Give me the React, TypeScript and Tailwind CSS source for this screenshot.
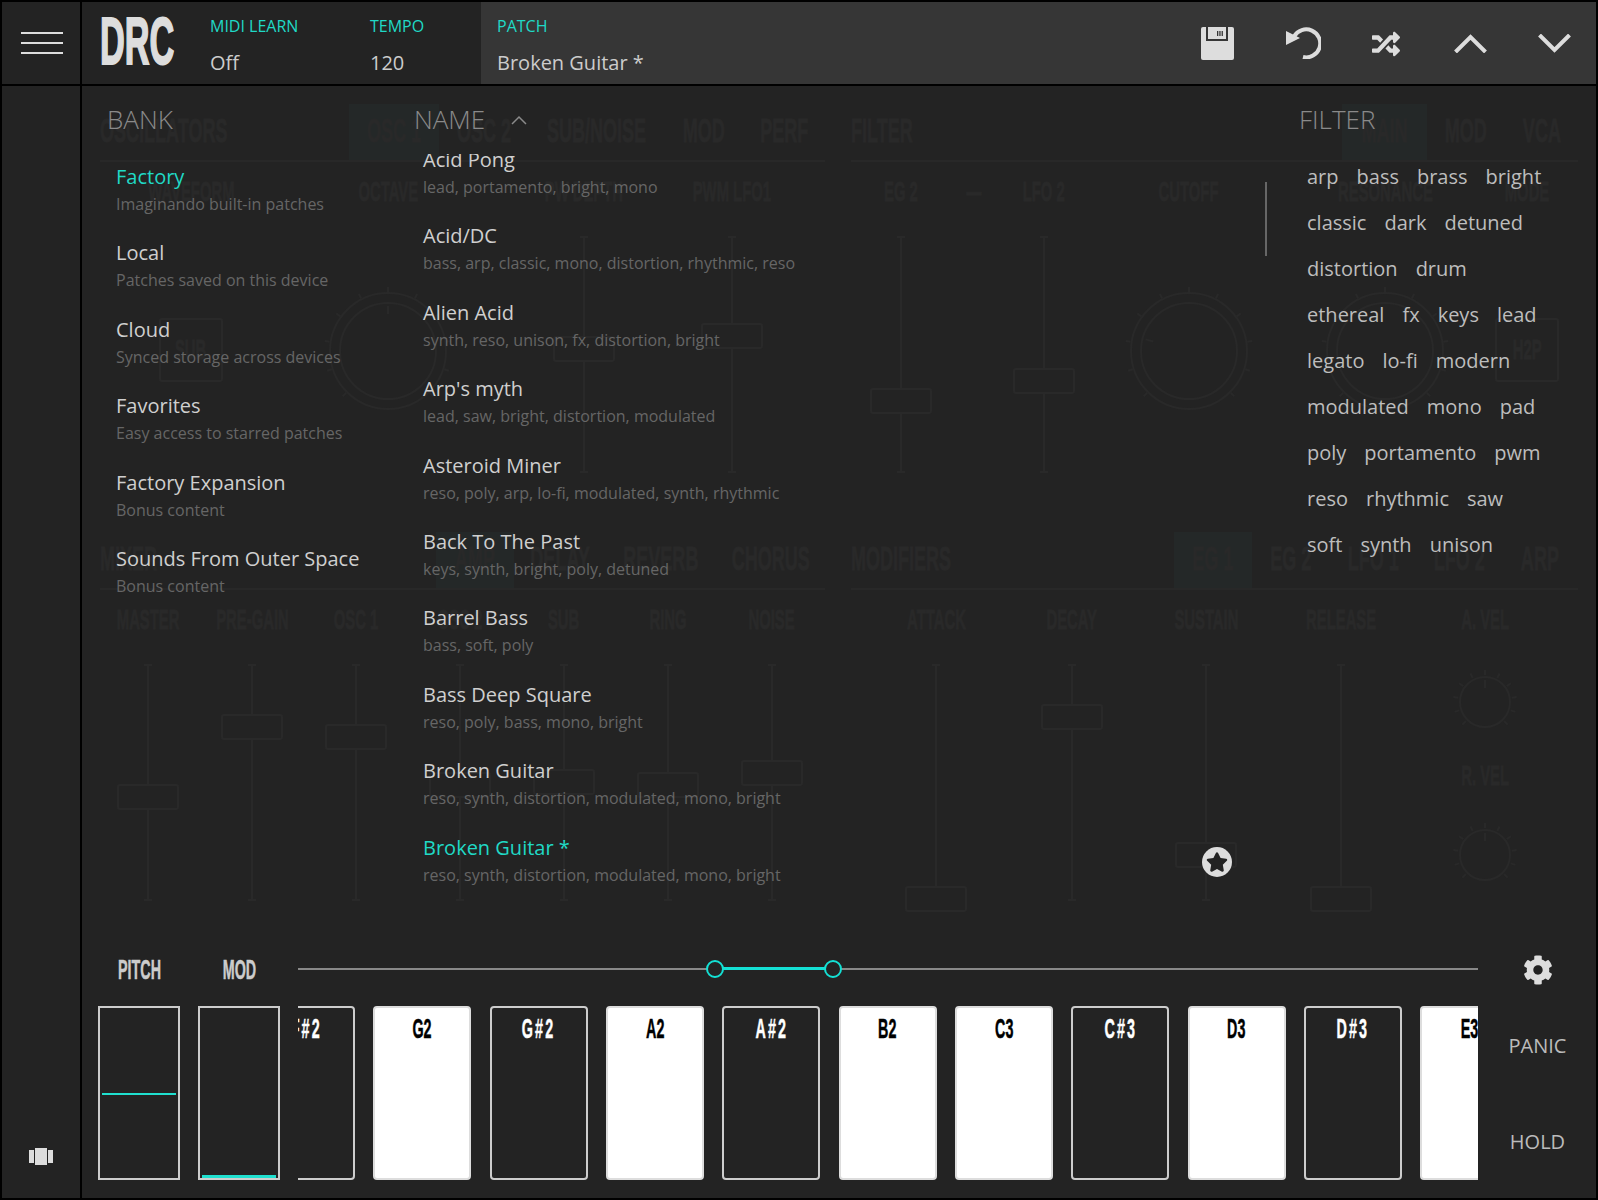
import { FaCog, FaRandom, FaStar } from "react-icons/fa";

const Cond = ({
  children,
  className = "",
  scale = "scale-x-[0.53]",
}: {
  children: React.ReactNode;
  className?: string;
  scale?: string;
}) => (
  <span
    className={`inline-block whitespace-nowrap font-bold font-['Liberation_Sans',sans-serif] ${scale} ${className}`}
  >
    {children}
  </span>
);

const Tab = ({ label, w, active }: { label: string; w: string; active?: boolean }) => (
  <div className={`${w} flex h-[56px] items-center justify-center pb-[3px] ${active ? "bg-[#242828]" : ""}`}>
    <Cond className="origin-center text-[34px] text-[#292929] [-webkit-text-stroke:1px]">{label}</Cond>
  </div>
);

const GhostLabel = ({ label }: { label: string }) => (
  <div className="mt-[15px] flex h-[30px] w-full items-center justify-center">
    <Cond className="origin-center text-[28px] text-[#292929] [-webkit-text-stroke:1px]">{label}</Cond>
  </div>
);

const Fader = ({ top }: { top: number }) => (
  <div className="relative mt-[29px] flex h-[237px] w-[62px] justify-center">
    <div className="h-full w-[2px] bg-[#292929]" />
    <div className="absolute left-[27px] top-0 h-[2px] w-[8px] bg-[#292929]" />
    <div className="absolute bottom-0 left-[27px] h-[2px] w-[8px] bg-[#292929]" />
    <div
      className="absolute left-0 h-[26px] w-[62px] rounded-[3px] border-2 border-[#292929] bg-[#232323]"
      style={{ top }}
    />
  </div>
);

const Knob = ({ size, angle, small }: { size: number; angle: number; small?: boolean }) => {
  const c = size / 2;
  const outer = small ? 25 : 58;
  const inner = small ? 25 : 48;
  const ticks = Array.from({ length: 11 }, (_, i) => -135 + i * 27);
  return (
    <svg width={size} height={size} viewBox={`0 0 ${size} ${size}`} fill="none" stroke="#292929" strokeWidth={2}>
      <circle cx={c} cy={c} r={outer} />
      {!small && <circle cx={c} cy={c} r={inner} />}
      {ticks.map((t) => (
        <line key={t} x1={c} y1={0} x2={c} y2={5} transform={`rotate(${t} ${c} ${c})`} />
      ))}
      <line x1={c} y1={c - inner + 3} x2={c} y2={c - inner + 11} transform={`rotate(${angle} ${c} ${c})`} />
    </svg>
  );
};

const GhostBox = ({ label }: { label: string }) => (
  <div className="mt-[111px] flex h-[64px] w-[64px] items-center justify-center rounded-[3px] border-2 border-[#292929]">
    <Cond className="origin-center text-[28px] text-[#292929] [-webkit-text-stroke:1px]">{label}</Cond>
  </div>
);

// the synth panel, dimmed behind the patch browser
const GhostPanel = () => (
  <div className="absolute inset-0 flex flex-col pl-[18px] pt-[18px]">
    <div className="flex h-[428px] gap-[26px]">
      <div className="w-[725px]">
        <div className="flex border-b-2 border-[#282828]">
          <div className="flex w-[249px] items-center pb-[3px]">
            <Cond className="origin-left text-[34px] text-[#292929] [-webkit-text-stroke:1px]">OSCILLATORS</Cond>
          </div>
          <Tab label="OSC 1" w="w-[90px]" active />
          <Tab label="OSC 2" w="w-[90px]" />
          <Tab label="SUB/NOISE" w="w-[136px]" />
          <Tab label="MOD" w="w-[78px]" />
          <Tab label="PERF" w="w-[82px]" />
        </div>
        <div className="flex">
          <div className="flex w-[182px] flex-col items-center">
            <GhostLabel label="WAVEFORM" />
            <GhostBox label="SUB" />
          </div>
          <div className="flex w-[212px] flex-col items-center">
            <GhostLabel label="OCTAVE" />
            <div className="mt-[80px]">
              <Knob size={128} angle={0} />
            </div>
          </div>
          <div className="flex w-[180px] flex-col items-center">
            <GhostLabel label="PW DEPTH" />
            <Fader top={100} />
          </div>
          <div className="flex w-[116px] flex-col items-center">
            <GhostLabel label="PWM LFO1" />
            <Fader top={87} />
          </div>
        </div>
      </div>
      <div className="w-[727px]">
        <div className="flex border-b-2 border-[#282828]">
          <div className="flex w-[491px] items-center pb-[3px]">
            <Cond className="origin-left text-[34px] text-[#292929] [-webkit-text-stroke:1px]">FILTER</Cond>
          </div>
          <Tab label="MAIN" w="w-[85px]" active />
          <Tab label="MOD" w="w-[78px]" />
          <Tab label="VCA" w="w-[73px]" />
        </div>
        <div className="flex">
          <div className="flex w-[100px] flex-col items-center">
            <GhostLabel label="EG 2" />
            <Fader top={152} />
          </div>
          <div className="flex w-[46px] flex-col items-center">
            <GhostLabel label="—" />
          </div>
          <div className="flex w-[94px] flex-col items-center">
            <GhostLabel label="LFO 2" />
            <Fader top={132} />
          </div>
          <div className="flex w-[196px] flex-col items-center">
            <GhostLabel label="CUTOFF" />
            <div className="mt-[80px]">
              <Knob size={128} angle={-75} />
            </div>
          </div>
          <div className="flex w-[196px] flex-col items-center">
            <GhostLabel label="RESONANCE" />
            <div className="mt-[80px]">
              <Knob size={128} angle={40} />
            </div>
          </div>
          <div className="flex w-[88px] flex-col items-center">
            <GhostLabel label="MODE" />
            <GhostBox label="H2P" />
          </div>
        </div>
      </div>
    </div>
    <div className="flex gap-[26px]">
      <div className="w-[725px]">
        <div className="flex border-b-2 border-[#282828]">
          <div className="flex w-[336px] items-center pb-[3px]">
            <Cond className="origin-left text-[34px] text-[#292929] [-webkit-text-stroke:1px]">MIXER</Cond>
          </div>
          <Tab label="AMP" w="w-[78px]" active />
          <Tab label="DELAY" w="w-[92px]" />
          <Tab label="REVERB" w="w-[110px]" />
          <Tab label="CHORUS" w="w-[109px]" />
        </div>
        <div className="-ml-[4px] flex">
          {(
            [
              ["MASTER", 120],
              ["PRE-GAIN", 50],
              ["OSC 1", 60],
              ["OSC 2", 108],
              ["SUB", 105],
              ["RING", 108],
              ["NOISE", 96],
            ] as const
          ).map(([label, top]) => (
            <div key={label} className="flex w-[104px] flex-col items-center">
              <GhostLabel label={label} />
              <Fader top={top} />
            </div>
          ))}
        </div>
      </div>
      <div className="w-[727px]">
        <div className="flex border-b-2 border-[#282828]">
          <div className="flex w-[323px] items-center pb-[3px]">
            <Cond className="origin-left text-[34px] text-[#292929] [-webkit-text-stroke:1px]">MODIFIERS</Cond>
          </div>
          <Tab label="EG 1" w="w-[78px]" active />
          <Tab label="EG 2" w="w-[78px]" />
          <Tab label="LFO 1" w="w-[86px]" />
          <Tab label="LFO 2" w="w-[86px]" />
          <Tab label="ARP" w="w-[76px]" />
        </div>
        <div className="flex">
          <div className="flex w-[170px] flex-col items-center">
            <GhostLabel label="ATTACK" />
            <Fader top={222} />
          </div>
          <div className="flex w-[102px] flex-col items-center">
            <GhostLabel label="DECAY" />
            <Fader top={40} />
          </div>
          <div className="flex w-[166px] flex-col items-center">
            <GhostLabel label="SUSTAIN" />
            <Fader top={178} />
          </div>
          <div className="flex w-[104px] flex-col items-center">
            <GhostLabel label="RELEASE" />
            <Fader top={222} />
          </div>
          <div className="flex w-[184px] flex-col items-center">
            <GhostLabel label="A. VEL" />
            <div className="mt-[35px]">
              <Knob size={64} angle={0} small />
            </div>
            <div className="mt-[27px] flex h-[30px] w-full items-center justify-center">
              <Cond className="origin-center text-[28px] text-[#292929] [-webkit-text-stroke:1px]">R. VEL</Cond>
            </div>
            <div className="mt-[32px]">
              <Knob size={64} angle={0} small />
            </div>
          </div>
        </div>
      </div>
    </div>
  </div>
);

const banks = [
  ["Factory", "Imaginando built-in patches"],
  ["Local", "Patches saved on this device"],
  ["Cloud", "Synced storage across devices"],
  ["Favorites", "Easy access to starred patches"],
  ["Factory Expansion", "Bonus content"],
  ["Sounds From Outer Space", "Bonus content"],
];

const patches = [
  ["Acid Pong", "lead, portamento, bright, mono"],
  ["Acid/DC", "bass, arp, classic, mono, distortion, rhythmic, reso"],
  ["Alien Acid", "synth, reso, unison, fx, distortion, bright"],
  ["Arp's myth", "lead, saw, bright, distortion, modulated"],
  ["Asteroid Miner", "reso, poly, arp, lo-fi, modulated, synth, rhythmic"],
  ["Back To The Past", "keys, synth, bright, poly, detuned"],
  ["Barrel Bass", "bass, soft, poly"],
  ["Bass Deep Square", "reso, poly, bass, mono, bright"],
  ["Broken Guitar", "reso, synth, distortion, modulated, mono, bright"],
  ["Broken Guitar *", "reso, synth, distortion, modulated, mono, bright"],
];

const tags = [
  "arp", "bass", "brass", "bright", "classic", "dark", "detuned", "distortion", "drum", "ethereal", "fx", "keys",
  "lead", "legato", "lo-fi", "modern", "modulated", "mono", "pad", "poly", "portamento", "pwm", "reso", "rhythmic",
  "saw", "soft", "synth", "unison",
];

const keys = [
  ["F#2", true], ["G2", false], ["G#2", true], ["A2", false], ["A#2", true], ["B2", false],
  ["C3", false], ["C#3", true], ["D3", false], ["D#3", true], ["E3", false],
] as const;

const ListItem = ({ title, sub, active }: { title: string; sub: string; active?: boolean }) => (
  <div className="h-[76.400px] pt-[11px]">
    <div className={`text-[20px] leading-[27px] ${active ? "text-[#20d9c6]" : "text-[#cfcfcf]"}`}>{title}</div>
    <div className="mt-[3px] whitespace-nowrap text-[16px] leading-[22px] text-[#666666]">{sub}</div>
  </div>
);

const HeaderField = ({ label, value }: { label: string; value: string }) => (
  <div className="pt-[14px]">
    <div className="text-[16px] leading-[20px] text-[#20d9c6]">{label}</div>
    <div className="mt-[13px] text-[20px] leading-[27px] text-[#cccccc]">{value}</div>
  </div>
);

const App = () => {
  return (
    <div className="flex h-[1200px] w-[1598px] flex-col border-2 border-black bg-[#232323] font-['Open_Sans',sans-serif]">
      {/* top bar */}
      <div className="flex h-[82px] shrink-0">
        <div className="flex w-[78px] flex-col items-center justify-center gap-[8px] pl-[2px]">
          <div className="h-[2px] w-[42px] bg-[#dddddd]" />
          <div className="h-[2px] w-[42px] bg-[#dddddd]" />
          <div className="h-[2px] w-[42px] bg-[#dddddd]" />
        </div>
        <div className="w-[2px] bg-black" />
        <div className="flex w-[128px] items-center pb-[4px] pl-[18px]">
          <Cond
            scale="scale-x-[0.52]"
            className="origin-left text-[66px] leading-none text-[#dddddd] [-webkit-text-stroke:2px]"
          >
            DRC
          </Cond>
        </div>
        <div className="w-[160px]">
          <HeaderField label="MIDI LEARN" value="Off" />
        </div>
        <div className="w-[111px]">
          <HeaderField label="TEMPO" value="120" />
        </div>
        <div className="flex flex-1 justify-between bg-[#363636] pl-[16px]">
          <HeaderField label="PATCH" value="Broken Guitar *" />
          <div className="mr-[25px] flex items-center gap-[51px] text-[#dddddd]">
            <svg width="33" height="33" viewBox="0 0 33 33" fill="currentColor">
              <path d="M2 0H31a2 2 0 0 1 2 2V31a2 2 0 0 1-2 2H2a2 2 0 0 1-2-2V2a2 2 0 0 1 2-2Z" />
              <rect x="5" y="0" width="22" height="14" fill="#363636" />
              <rect x="7" y="0" width="18" height="12" fill="#dddddd" />
              <path d="M16 4h1.300v5H16zM18.300 4h1.300v5h-1.300zM20.600 4h1.300v5h-1.300z" fill="#363636" />
            </svg>
            <svg width="36" height="32" viewBox="0 0 36 32" fill="none" stroke="currentColor" strokeWidth="4">
              <path d="M9 9.500A14 14 0 1 1 18 30" />
              <path d="M1 4 L1 18 L15 11 Z" fill="currentColor" stroke="none" />
            </svg>
            <div className="flex w-[31px] justify-start pt-[2px]">
              <FaRandom size={28} />
            </div>
            <svg width="33" height="19" viewBox="0 0 33 19" fill="none" stroke="currentColor" strokeWidth="4">
              <path d="M1.500 18 16.500 3l15 15" />
            </svg>
            <svg width="33" height="19" viewBox="0 0 33 19" fill="none" stroke="currentColor" strokeWidth="4">
              <path d="M1.500 1 16.500 16l15-15" />
            </svg>
          </div>
        </div>
      </div>
      <div className="h-[2px] shrink-0 bg-black" />

      <div className="flex min-h-0 flex-1">
        {/* left rail */}
        <div className="flex w-[78px] items-end justify-center pb-[33px]">
          <svg width="24" height="17" viewBox="0 0 24 17" fill="#dddddd">
            <rect x="0" y="2" width="5" height="13" />
            <rect x="6" y="0" width="12" height="17" />
            <rect x="19" y="2" width="5" height="13" />
          </svg>
        </div>
        <div className="w-[2px] bg-black" />

        <div className="flex min-w-0 flex-1 flex-col">
          {/* patch browser */}
          <div className="relative h-[864px] shrink-0">
            <GhostPanel />
            <div className="relative flex h-full">
              <div className="w-[332px] pl-[25px]">
                <div className="h-[66px] pt-[15px] text-[26px] font-light leading-[36px] text-[#8a8a8a]">BANK</div>
                <div className="pl-[9px]">
                  {banks.map(([title, sub], i) => (
                    <ListItem key={title} title={title} sub={sub} active={i === 0} />
                  ))}
                </div>
              </div>
              <div className="relative w-[885px]">
                <div className="flex h-[68px] items-start gap-[26px] pt-[15px]">
                  <span className="text-[26px] font-light leading-[36px] text-[#8a8a8a]">NAME</span>
                  <svg className="mt-[14px]" width="16" height="10" viewBox="0 0 16 10" fill="none" stroke="#8a8a8a" strokeWidth="1.500">
                    <path d="M1 9l7-7 7 7" />
                  </svg>
                </div>
                <div className="h-[758px] overflow-hidden pl-[9px]">
                  <div className="-mt-[19px]">
                    {patches.map(([title, sub], i) => (
                      <ListItem key={title} title={title} sub={sub} active={i === patches.length - 1} />
                    ))}
                  </div>
                </div>
                <div className="absolute right-[32px] top-[96px] h-[74px] w-[2px] bg-[#666666]" />
              </div>
              <div className="flex-1">
                <div className="h-[66px] pt-[15px] text-[26px] font-light leading-[36px] text-[#8a8a8a]">FILTER</div>
                <div className="mt-[11px] box-content flex w-[243px] flex-wrap gap-x-[18px] gap-y-[19px] pl-[8px]">
                  {tags.map((t) => (
                    <span key={t} className="text-[20px] leading-[27px] text-[#bdbdbd]">
                      {t}
                    </span>
                  ))}
                </div>
              </div>
            </div>
            <div className="absolute left-[1120px] top-[761px] flex h-[30px] w-[30px] items-center justify-center rounded-full bg-[#dddddd]">
              <FaStar size={22} className="text-[#232323]" />
            </div>
          </div>

          {/* performance strip */}
          <div className="flex flex-1 pl-[16px]">
            <div className="w-[82px]">
              <div className="flex h-[40px] items-center justify-center">
                <Cond className="origin-center text-[27px] text-[#cccccc] [-webkit-text-stroke:0.5px]">PITCH</Cond>
              </div>
              <div className="mt-[16px] flex h-[174px] items-center border-2 border-[#cccccc] px-[2px] pt-[2px]">
                <div className="h-[2px] w-full bg-[#1fe0cf]" />
              </div>
            </div>
            <div className="ml-[18px] w-[82px]">
              <div className="flex h-[40px] items-center justify-center">
                <Cond className="origin-center text-[27px] text-[#cccccc] [-webkit-text-stroke:0.5px]">MOD</Cond>
              </div>
              <div className="mt-[16px] flex h-[174px] items-end border-2 border-[#cccccc] px-[2px]">
                <div className="h-[3px] w-full bg-[#1fe0cf]" />
              </div>
            </div>
            <div className="ml-[18px] w-[1180px]">
              <div className="relative h-[40px]">
                <div className="absolute left-0 right-0 top-[18px] h-[2px] bg-[#888888]" />
                <div className="absolute left-[418px] top-[17px] h-[3px] w-[118px] bg-[#14e0d4]" />
                <div className="absolute left-[408px] top-[10px] h-[18px] w-[18px] rounded-full border-[2.500px] border-[#14e0d4] bg-[#232323]" />
                <div className="absolute left-[526px] top-[10px] h-[18px] w-[18px] rounded-full border-[2.500px] border-[#14e0d4] bg-[#232323]" />
              </div>
              <div className="mt-[16px] overflow-hidden">
                <div className="-ml-[41px] flex gap-[18.330px]">
                  {keys.map(([note, black]) => (
                    <div
                      key={note}
                      className={`flex h-[174px] w-[98px] shrink-0 justify-center rounded-[4px] border-2 pt-[5px] ${
                        black ? "border-[#cccccc] bg-[#232323]" : "border-[#dddddd] bg-white"
                      }`}
                    >
                      <Cond
                        className={`h-[32px] text-[27px] leading-[32px] [-webkit-text-stroke:0.5px] ${
                          black ? "tracking-[4px] text-white" : "text-black"
                        }`}
                      >
                        {note}
                      </Cond>
                    </div>
                  ))}
                </div>
              </div>
            </div>
            <div className="flex flex-1 flex-col items-center pl-[1px] text-[20px] leading-[27px] text-[#bbbbbb]">
              <div className="flex h-[40px] items-center">
                <FaCog size={30} className="text-[#dddddd]" />
              </div>
              <div className="mt-[42px]">PANIC</div>
              <div className="mt-[69px]">HOLD</div>
            </div>
          </div>
        </div>
      </div>
    </div>
  );
};

export default App;
